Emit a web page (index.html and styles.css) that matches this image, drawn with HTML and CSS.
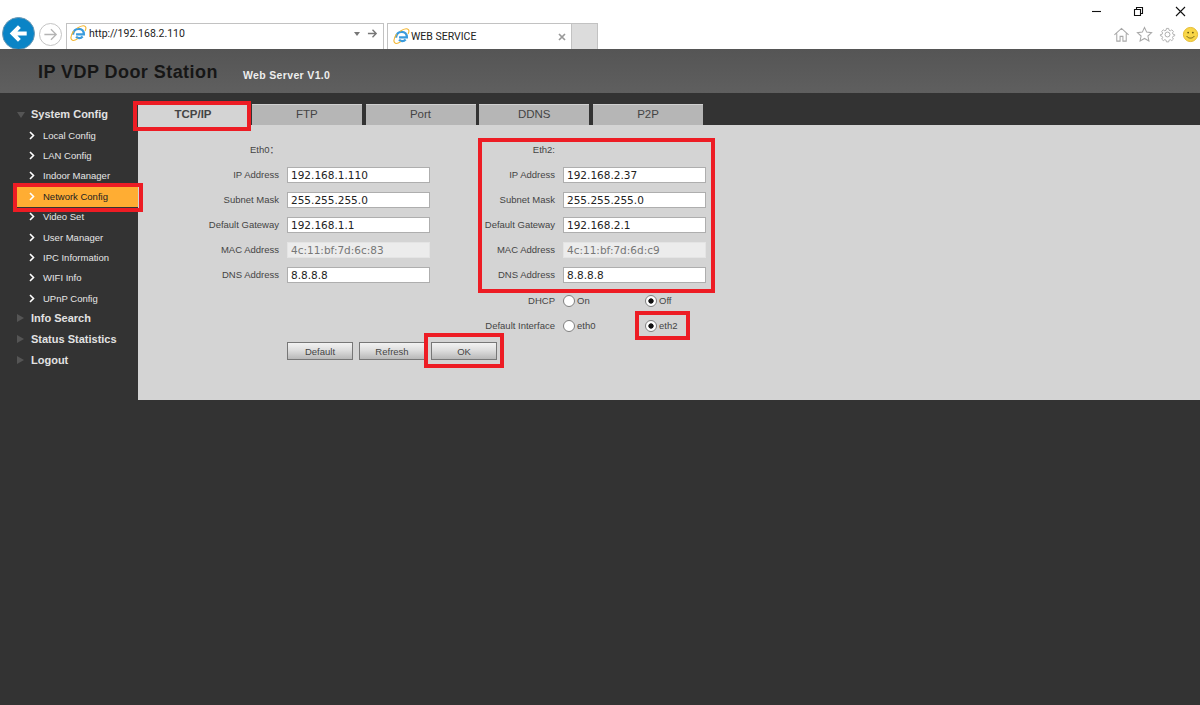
FILE: index.html
```html
<!DOCTYPE html>
<html lang="en">
<head>
<meta charset="utf-8">
<title>WEB SERVICE</title>
<link rel="stylesheet" href="styles.css">
</head>
<body>
<svg class="defs" width="0" height="0" aria-hidden="true">
  <symbol id="ie" viewBox="0 0 18 18">
    <path d="M3.2 10.2C3.4 6.4 6 4 9.2 4c3.3 0 5.5 2.4 5.5 5.9H6.4M6.5 12.3c1.6 2.2 5 2 6.9-.1" fill="none" stroke="#3a9bdc" stroke-width="2.4"/>
    <path d="M3.8 6.5C1.4 10 .4 14 1.8 15.6c1.200 1.400 4.200.3 6.400-1.200M7.500 3.400c3.800-2.400 7.500-3 8.800-1.700.9.9.6 2.700-.4 4.700" fill="none" stroke="#f2b632" stroke-width="1.200"/>
  </symbol>
  <symbol id="chev" viewBox="0 0 6 9"><path d="M1 1l3.500 3.500L1 8" fill="none" stroke="currentColor" stroke-width="1.600"/></symbol>
</svg>

<header class="chrome">
  <div class="win-controls">
    <svg class="win-ic" viewBox="0 0 11 11"><path d="M1 5.500h9" stroke="#111" stroke-width="1.100"/></svg>
    <svg class="win-ic" viewBox="0 0 11 11"><path d="M1.500 3.500h6v6h-6zM3.500 3.500v-2h6v6h-2" fill="none" stroke="#111" stroke-width="1.100"/></svg>
    <svg class="win-ic" viewBox="0 0 11 11"><path d="M1 1l9 9M10 1l-9 9" stroke="#111" stroke-width="1.100"/></svg>
  </div>
  <div class="nav-row">
    <button class="back" aria-label="Back">
      <svg viewBox="0 0 34 34"><path d="M26 17H11M18 9.500L10.500 17l7.500 7.500" fill="none" stroke="#fff" stroke-width="4.400"/></svg>
    </button>
    <button class="forward" aria-label="Forward">
      <svg viewBox="0 0 24 24"><path d="M5 12h13M12.500 6l6 6-6 6" fill="none" stroke="#b4b4b4" stroke-width="1.500"/></svg>
    </button>
    <div class="address">
      <svg class="ie"><use href="#ie"/></svg>
      <span class="url">http://192.168.2.110</span>
      <span class="caret"></span>
      <svg class="go" viewBox="0 0 12 12"><path d="M1 6h9M6 2l4 4-4 4" fill="none" stroke="#777" stroke-width="1.500"/></svg>
    </div>
    <div class="tab">
      <svg class="ie"><use href="#ie"/></svg>
      <span class="tab-title">WEB SERVICE</span>
      <svg class="tab-x" viewBox="0 0 8 8"><path d="M1 1l6 6M7 1L1 7" stroke="#999" stroke-width="1.700"/></svg>
    </div>
    <div class="new-tab"></div>
    <div class="tools">
      <svg class="tool" viewBox="0 0 18 18"><path d="M1.500 9.500L9 2.500l7.500 7M4 8v8h3.500v-5h3v5H14V8" fill="none" stroke="#a8a8a8" stroke-width="1.100"/></svg>
      <svg class="tool" viewBox="0 0 18 18"><path d="M9 1.500l2.300 5 5.200.6-3.900 3.500 1.100 5.300L9 13.200l-4.700 2.700 1.100-5.300L1.500 7.100l5.200-.6z" fill="none" stroke="#a8a8a8" stroke-width="1.100"/></svg>
      <svg class="tool" viewBox="0 0 18 18"><circle cx="9" cy="9" r="2.600" fill="none" stroke="#a8a8a8"/><path d="M7.600 1.500h2.800l.4 2.200 1.700.8 1.900-1.200 2 2-1.200 1.900.7 1.700 2.100.4v1.500l-2.100.6-.7 1.700 1.200 1.800-2 2-1.900-1.200-1.700.7-.4 2.100H7.600l-.4-2.100-1.700-.7-1.900 1.200-2-2 1.200-1.800-.7-1.700L0 10.800V9.300l2.100-.4.700-1.700-1.200-1.900 2-2 1.900 1.200 1.700-.8z" transform="translate(1.500 1.300) scale(.84)" fill="none" stroke="#a8a8a8" stroke-width="1.100"/></svg>
      <svg class="tool" viewBox="0 0 18 18"><circle cx="9" cy="9" r="7.500" fill="#f8d648" stroke="#e3b92e"/><circle cx="6.500" cy="7" r="1" fill="#6b5a10"/><circle cx="11.500" cy="7" r="1" fill="#6b5a10"/><path d="M5 10.800c1.800 2.700 6.200 2.700 8 0" fill="none" stroke="#6b5a10"/></svg>
    </div>
  </div>
</header>

<div class="banner">
  <h1 class="title">IP VDP Door Station</h1>
  <span class="version">Web Server V1.0</span>
</div>

<div class="main">
  <nav class="side">
    <a class="side-main"><span class="tri tri-down"></span>System Config</a>
    <a class="side-sub"><svg class="chev"><use href="#chev"/></svg>Local Config</a>
    <a class="side-sub"><svg class="chev"><use href="#chev"/></svg>LAN Config</a>
    <a class="side-sub"><svg class="chev"><use href="#chev"/></svg>Indoor Manager</a>
    <a class="side-sub is-active"><svg class="chev"><use href="#chev"/></svg>Network Config</a>
    <a class="side-sub"><svg class="chev"><use href="#chev"/></svg>Video Set</a>
    <a class="side-sub"><svg class="chev"><use href="#chev"/></svg>User Manager</a>
    <a class="side-sub"><svg class="chev"><use href="#chev"/></svg>IPC Information</a>
    <a class="side-sub"><svg class="chev"><use href="#chev"/></svg>WIFI Info</a>
    <a class="side-sub"><svg class="chev"><use href="#chev"/></svg>UPnP Config</a>
    <a class="side-main"><span class="tri tri-right"></span>Info Search</a>
    <a class="side-main"><span class="tri tri-right"></span>Status Statistics</a>
    <a class="side-main"><span class="tri tri-right"></span>Logout</a>
  </nav>

  <section class="content">
    <div class="tabs">
      <a class="ctab is-current">TCP/IP</a>
      <a class="ctab">FTP</a>
      <a class="ctab">Port</a>
      <a class="ctab">DDNS</a>
      <a class="ctab">P2P</a>
    </div>
    <form class="panel">
      <span class="lbl">Eth0：</span><span></span>
      <span class="lbl">Eth2:</span><span></span>

      <label class="lbl">IP Address</label><input class="field" value="192.168.1.110">
      <label class="lbl">IP Address</label><input class="field" value="192.168.2.37">

      <label class="lbl">Subnet Mask</label><input class="field" value="255.255.255.0">
      <label class="lbl">Subnet Mask</label><input class="field" value="255.255.255.0">

      <label class="lbl">Default Gateway</label><input class="field" value="192.168.1.1">
      <label class="lbl">Default Gateway</label><input class="field" value="192.168.2.1">

      <label class="lbl">MAC Address</label><input class="field" value="4c:11:bf:7d:6c:83" disabled>
      <label class="lbl">MAC Address</label><input class="field" value="4c:11:bf:7d:6d:c9" disabled>

      <label class="lbl">DNS Address</label><input class="field" value="8.8.8.8">
      <label class="lbl">DNS Address</label><input class="field" value="8.8.8.8">

      <span class="lbl lbl-right">DHCP</span>
      <div class="radios">
        <label class="radio"><input type="radio" name="dhcp">On</label>
        <label class="radio"><input type="radio" name="dhcp" checked>Off</label>
      </div>

      <span class="lbl lbl-right">Default Interface</span>
      <div class="radios">
        <label class="radio"><input type="radio" name="iface">eth0</label>
        <label class="radio"><input type="radio" name="iface" checked>eth2</label>
      </div>

      <div class="actions">
        <button type="button" class="btn">Default</button>
        <button type="button" class="btn">Refresh</button>
        <button type="button" class="btn">OK</button>
      </div>
    </form>
  </section>
</div>

<div class="mark mark-tab"></div>
<div class="mark mark-menu"></div>
<div class="mark mark-eth2"></div>
<div class="mark mark-iface"></div>
<div class="mark mark-ok"></div>
</body>
</html>
```

FILE: styles.css
```css
* { box-sizing: border-box; }
html, body { margin: 0; height: 705px; overflow: hidden; }
body {
  position: relative;
  background: #333333;
  font-family: "Liberation Sans", "Noto Sans CJK SC", Arial, sans-serif;
  color: #444;
}
.defs { position: absolute; }

/* browser chrome */
.chrome { height: 49px; background: #fff; position: relative; overflow: hidden; }
.win-controls { position: absolute; top: 6px; right: 14px; display: flex; gap: 31px; }
.win-ic { width: 11px; height: 11px; display: block; }
.nav-row { display: flex; align-items: flex-start; padding: 23px 0 0 2px; height: 49px; }
.back {
  width: 33px; height: 33px; margin-top: -6px; padding: 0; flex: none;
  border: 1px solid #6b98b4; border-radius: 50%; background: #0a84c6;
}
.back svg, .forward svg { display: block; width: 100%; height: 100%; }
.forward {
  width: 23px; height: 23px; margin: 0 0 0 4px; padding: 0; flex: none;
  border: 1px solid #c4c4c4; border-radius: 50%; background: #fff;
}
.address {
  width: 318px; height: 26px; margin-left: 4px; flex: none;
  border: 1px solid #c2c2c2; border-bottom: 0;
  display: flex; align-items: center; padding: 0 5px 6px 3px;
}
.ie { width: 17px; height: 17px; flex: none; }
.url { font: 10.500px Roboto, sans-serif; color: #222; margin-left: 2px; flex: 1; }
.caret { width: 0; height: 0; border: 3.5px solid transparent; border-top: 4px solid #777; border-bottom: 0; margin-right: 7px; }
.go { width: 11px; height: 11px; }
.tab {
  width: 185px; height: 26px; margin-left: 3px; flex: none;
  border: 1px solid #c2c2c2; border-bottom: 0;
  display: flex; align-items: center; padding: 0 5px 0 5px;
}
.tab-title { font: 10.500px Roboto, sans-serif; color: #222; margin-left: 1px; flex: 1; }
.tab-x { width: 8px; height: 8px; }
.new-tab { width: 26px; height: 26px; flex: none; background: #dcdcdc; border: 1px solid #c2c2c2; border-width: 1px 1px 0 0; }
.tools { margin-left: auto; margin-top: 3px; padding-right: 1px; display: flex; gap: 6px; }
.tool { width: 17px; height: 17px; display: block; }

/* banner */
.banner {
  height: 44px; padding-left: 38px;
  background: linear-gradient(#555555, #5f5f5f);
  display: flex; align-items: center; gap: 25px;
}
.title { margin: 0; font-size: 18px; font-weight: bold; color: #161616; letter-spacing: .45px; position: relative; top: 1px; }
.version { font-size: 10.500px; font-weight: bold; color: #eee; position: relative; top: 4px; letter-spacing: .35px; }

/* layout */
.main { display: flex; align-items: flex-start; }

/* sidebar */
.side { width: 138px; flex: none; padding-top: 11px; display: flex; flex-direction: column; }
.side-main {
  height: 21px; display: flex; align-items: center; padding: 0 0 2px 17px;
  font-size: 11px; font-weight: bold; color: #e2e2e2;
}
.tri { width: 14px; flex: none; }
.tri::before { content: ""; display: block; width: 0; height: 0; border-style: solid; border-color: transparent; }
.tri-down::before { border-width: 6px 4.500px 0; border-top-color: #555; margin-top: 2px; }
.tri-right::before { border-width: 4.500px 0 4.500px 7px; border-left-color: #555; }
.side-sub {
  height: 20.400px; display: flex; align-items: center; padding-left: 29px;
  font-size: 9.500px; color: #e6e6e6;
}
.chev { width: 6px; height: 9px; margin-right: 8px; color: #fff; flex: none; }
.is-active { margin-left: 17px; padding-left: 12px; background: #ffad33; color: #222; }

/* tabs + panel */
.content { flex: 1; padding-top: 11px; }
.tabs { display: flex; gap: 3.750px; height: 21px; }
.ctab {
  width: 110px; display: flex; align-items: center; justify-content: center; padding-bottom: 2px;
  font-size: 11.500px; color: #444; background: #b6b6b6; border-top: 1px solid #d0d0d0;
}
.is-current { background: #d4d4d4; font-weight: bold; }
.panel {
  height: 275px; background: #d4d4d4; padding-top: 13px;
  display: grid;
  grid-template-columns: 141px 143px 117px 143px;
  grid-auto-rows: 25px;
  column-gap: 8px;
}
.lbl { font-size: 9.500px; line-height: 24px; text-align: right; color: #444; }
.lbl-right { grid-column: 3; line-height: 25px; }
.field {
  width: 143px; height: 16px; margin-top: 4px; padding: 0 3px;
  border: 1px solid #aeaeae; background: #fff;
  font: 10.500px "DejaVu Sans", sans-serif; color: #222; border-radius: 0; outline: 0;
}
.field:disabled { background: #ececec; border-color: #e4e4e4; color: #777; }
.radios { display: flex; align-items: center; height: 25px; }
.radio { width: 82px; flex: none; display: flex; align-items: center; gap: 2px; font-size: 9.500px; color: #444; }
.radio input {
  appearance: none; width: 12px; height: 12px; margin: 0; flex: none;
  border: 1px solid #808080; border-radius: 50%; background: #fff;
}
.radio input:checked { background: radial-gradient(circle, #111 0 2.300px, #fff 3px); }
.actions { grid-column: 2 / 5; display: flex; gap: 6px; padding-top: 4px; }
.btn {
  width: 66px; height: 18px; padding: 0;
  border: 1px solid #777; border-radius: 0;
  background: linear-gradient(#f2f2f2, #dedede 45%, #b8b8b8);
  font: 9.500px "Liberation Sans", sans-serif; color: #444;
}

/* annotations laid over the screenshot */
.mark { position: absolute; border: 4px solid #ed1c24; pointer-events: none; }
.mark-tab { left: 133px; top: 101px; width: 118px; height: 30px; }
.mark-menu { left: 13px; top: 183px; width: 130px; height: 29px; }
.mark-eth2 { left: 478px; top: 138px; width: 237px; height: 155px; }
.mark-iface { left: 635px; top: 311px; width: 55px; height: 29px; }
.mark-ok { left: 424px; top: 333px; width: 80px; height: 35px; }
```
